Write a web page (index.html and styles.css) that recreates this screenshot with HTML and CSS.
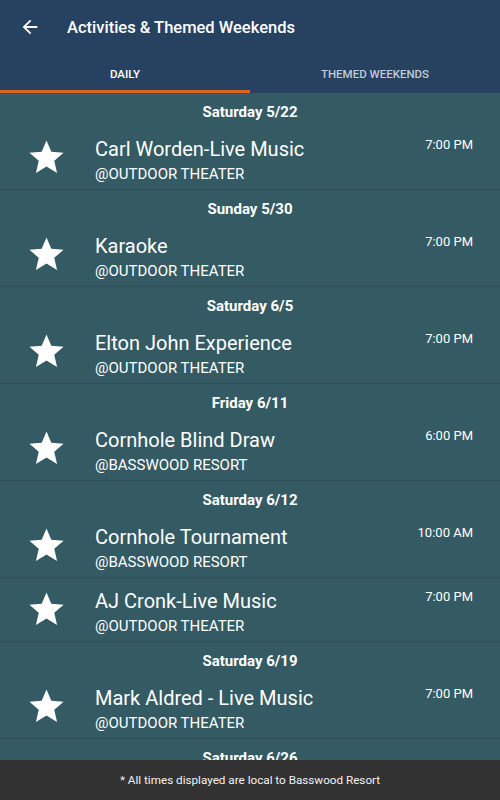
FILE: index.html
```html
<!DOCTYPE html>
<html lang="en">
<head>
    <meta charset="UTF-8">
    <title>Activities &amp; Themed Weekends</title>
    <link rel="stylesheet" href="styles.css">
</head>
<body>
<div class="app">
    <div class="topbar">
        <div class="toolbar">
            <a href="javascript:void(0);" class="back">
                <svg viewBox="0 0 24 24" width="22" height="22"><path fill="#fff" d="M20 11H7.83l5.59-5.59L12 4l-8 8 8 8 1.41-1.41L7.83 13H20v-2z"/></svg>
            </a>
            <h1 class="title">Activities &amp; Themed Weekends</h1>
        </div>
        <ul class="tabs">
            <li class="tab active">DAILY</li>
            <li class="tab">THEMED WEEKENDS</li>
        </ul>
    </div>

    <div class="list">
        <div class="day">Saturday 5/22</div>
        <div class="item">
            <div class="star"><svg viewBox="0 0 24 24" width="41" height="41"><path fill="#fff" d="M12 17.27L18.18 21l-1.64-7.03L22 9.24l-7.19-.61L12 2 9.19 8.63 2 9.24l5.46 4.73L5.82 21z"/></svg></div>
            <div class="info">
                <div class="name">Carl Worden-Live Music</div>
                <div class="place">@OUTDOOR THEATER</div>
            </div>
            <div class="time">7:00 PM</div>
        </div>

        <div class="day">Sunday 5/30</div>
        <div class="item">
            <div class="star"><svg viewBox="0 0 24 24" width="41" height="41"><path fill="#fff" d="M12 17.27L18.18 21l-1.64-7.03L22 9.24l-7.19-.61L12 2 9.19 8.63 2 9.24l5.46 4.73L5.82 21z"/></svg></div>
            <div class="info">
                <div class="name">Karaoke</div>
                <div class="place">@OUTDOOR THEATER</div>
            </div>
            <div class="time">7:00 PM</div>
        </div>

        <div class="day">Saturday 6/5</div>
        <div class="item">
            <div class="star"><svg viewBox="0 0 24 24" width="41" height="41"><path fill="#fff" d="M12 17.27L18.18 21l-1.64-7.03L22 9.24l-7.19-.61L12 2 9.19 8.63 2 9.24l5.46 4.73L5.82 21z"/></svg></div>
            <div class="info">
                <div class="name">Elton John Experience</div>
                <div class="place">@OUTDOOR THEATER</div>
            </div>
            <div class="time">7:00 PM</div>
        </div>

        <div class="day">Friday 6/11</div>
        <div class="item">
            <div class="star"><svg viewBox="0 0 24 24" width="41" height="41"><path fill="#fff" d="M12 17.27L18.18 21l-1.64-7.03L22 9.24l-7.19-.61L12 2 9.19 8.63 2 9.24l5.46 4.73L5.82 21z"/></svg></div>
            <div class="info">
                <div class="name">Cornhole Blind Draw</div>
                <div class="place">@BASSWOOD RESORT</div>
            </div>
            <div class="time">6:00 PM</div>
        </div>

        <div class="day">Saturday 6/12</div>
        <div class="item">
            <div class="star"><svg viewBox="0 0 24 24" width="41" height="41"><path fill="#fff" d="M12 17.27L18.18 21l-1.64-7.03L22 9.24l-7.19-.61L12 2 9.19 8.63 2 9.24l5.46 4.73L5.82 21z"/></svg></div>
            <div class="info">
                <div class="name">Cornhole Tournament</div>
                <div class="place">@BASSWOOD RESORT</div>
            </div>
            <div class="time">10:00 AM</div>
        </div>
        <div class="item">
            <div class="star"><svg viewBox="0 0 24 24" width="41" height="41"><path fill="#fff" d="M12 17.27L18.18 21l-1.64-7.03L22 9.24l-7.19-.61L12 2 9.19 8.63 2 9.24l5.46 4.73L5.82 21z"/></svg></div>
            <div class="info">
                <div class="name">AJ Cronk-Live Music</div>
                <div class="place">@OUTDOOR THEATER</div>
            </div>
            <div class="time">7:00 PM</div>
        </div>

        <div class="day">Saturday 6/19</div>
        <div class="item">
            <div class="star"><svg viewBox="0 0 24 24" width="41" height="41"><path fill="#fff" d="M12 17.27L18.18 21l-1.64-7.03L22 9.24l-7.19-.61L12 2 9.19 8.63 2 9.24l5.46 4.73L5.82 21z"/></svg></div>
            <div class="info">
                <div class="name">Mark Aldred - Live Music</div>
                <div class="place">@OUTDOOR THEATER</div>
            </div>
            <div class="time">7:00 PM</div>
        </div>

        <div class="day">Saturday 6/26</div>
    </div>

    <div class="note">* All times displayed are local to Basswood Resort</div>
</div>
</body>
</html>
```

FILE: styles.css
```css
*{
    margin: 0;
    padding: 0;
}

html, body{
    height: 100%;
    overflow: hidden;
}

body{
    font-family: Roboto, "Liberation Sans", sans-serif;
    color: #fff;
    background-color: #345a64;
}

.app{
    height: 800px;
    position: relative;
    overflow: hidden;
}

/* 顶部 */
.topbar{
    background-color: #274261;
}
.toolbar{
    height: 54px;
    display: flex;
    align-items: center;
}
.toolbar .back{
    width: 22px;
    height: 22px;
    margin-left: 19px;
    display: flex;
}
.toolbar .title{
    margin-left: 26px;
    font-size: 16.5px;
    font-weight: 500;
}

.tabs{
    list-style: none;
    display: flex;
    height: 39px;
}
.tabs .tab{
    flex: 1;
    display: flex;
    align-items: center;
    justify-content: center;
    font-size: 11.5px;
    font-weight: 500;
    color: #c2cad3;
    border-bottom: 3px solid transparent;
    padding-top: 3px;
}
.tabs .tab.active{
    color: #fff;
    border-bottom-color: #d9661f;
}

/* 列表 */
.day{
    text-align: center;
    font-size: 15px;
    font-weight: bold;
    line-height: 18px;
    padding: 10px 0 5px;
}

.item{
    display: flex;
    align-items: flex-start;
    height: 63px;
    border-bottom: 1px solid #2d5059;
}
.item .star{
    width: 69px;
    padding-left: 26px;
    padding-top: 11px;
}
.item .star svg{
    display: block;
}
.item .info{
    flex: 1;
    padding-top: 11px;
}
.item .name{
    font-size: 20px;
    line-height: 24px;
}
.item .place{
    font-size: 15px;
    line-height: 20px;
    margin-top: 3px;
}
.item .time{
    font-size: 13px;
    line-height: 18px;
    padding-top: 10px;
    padding-right: 27px;
}

/* 底部提示 */
.note{
    position: absolute;
    left: 0;
    bottom: 0;
    width: 100%;
    height: 40px;
    line-height: 40px;
    background-color: #323232;
    text-align: center;
    font-size: 11.7px;
    color: #f2f2f2;
}
```
